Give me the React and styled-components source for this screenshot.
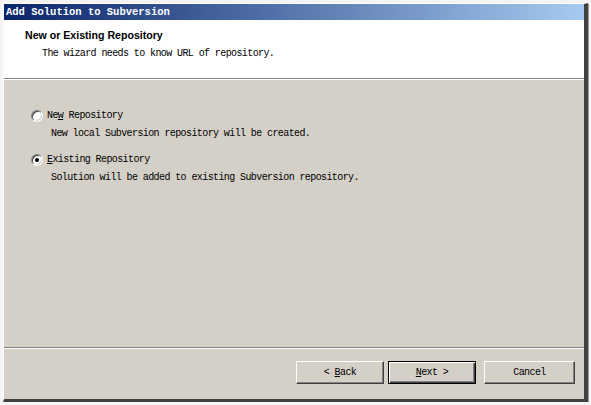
import styled, { createGlobalStyle } from "styled-components";

const GlobalStyle = createGlobalStyle`
    html, body {
        margin: 0;
        padding: 0;
        background: #f4f4f4;
    }
`;

const mono = `"Liberation Mono", "DejaVu Sans Mono", monospace`;

const Window = styled.div`
    box-sizing: border-box;
    margin: 3px 0 0 3px;
    width: 585px;
    height: 399px;
    display: flex;
    flex-direction: column;
    background: #d4d0c8;
    border-top: 1px solid #ffffff;
    border-left: 1px solid #ffffff;
    border-right: 4px solid #404040;
    border-bottom: 3px solid #404040;
    box-shadow: 1px 1px 0 #a0a0a0;
`;

const TitleBar = styled.div`
    height: 16px;
    display: flex;
    align-items: center;
    padding-left: 2px;
    background: linear-gradient(to right, #0a246a, #a6caf0);
    color: #ffffff;
    font-family: ${mono};
    font-weight: bold;
    font-size: 10.5px;
`;

const Header = styled.div`
    height: 59px;
    box-sizing: border-box;
    background: #ffffff;
    padding: 9px 0 0 21px;
    border-bottom: 1px solid #808080;
    box-shadow: 0 1px 0 #ffffff;
    margin-bottom: 1px;
`;

const Heading = styled.div`
    font-family: "Liberation Sans", Arial, sans-serif;
    font-weight: bold;
    font-size: 10.6px;
    line-height: 12px;
    color: #000;
`;

const Subtitle = styled.div`
    margin: 7px 0 0 17px;
    font-family: ${mono};
    font-size: 10px;
    letter-spacing: -0.6px;
    line-height: 12px;
    color: #000;
`;

const Body = styled.div`
    flex: 1;
    padding: 30px 0 0 27px;
    display: flex;
    flex-direction: column;
    gap: 14px;
    border-bottom: 1px solid #808080;
    box-shadow: 0 1px 0 #ffffff;
    margin-bottom: 1px;
`;

const Option = styled.div`
    display: flex;
    flex-direction: column;
    gap: 6px;
`;

const OptionRow = styled.label`
    display: flex;
    align-items: center;
    gap: 4px;
`;

const Radio = styled.span`
    box-sizing: border-box;
    width: 12px;
    height: 12px;
    border-radius: 50%;
    background: #ffffff;
    border: 1px solid;
    border-color: #808080 #ffffff #ffffff #808080;
    box-shadow: inset 1px 1px 0 #404040, inset -1px -1px 0 #d4d0c8;
    display: flex;
    align-items: center;
    justify-content: center;
    &::after {
        content: "";
        width: 4px;
        height: 4px;
        border-radius: 50%;
        background: ${(p) => (p.checked ? "#000" : "transparent")};
    }
`;

const Text = styled.span`
    font-family: ${mono};
    font-size: 10px;
    letter-spacing: -0.6px;
    line-height: 12px;
    color: #000;
`;

const Description = styled(Text)`
    padding-left: 20px;
`;

const Key = styled.u`
    text-decoration: underline;
`;

const Footer = styled.div`
    height: 50px;
    box-sizing: border-box;
    display: flex;
    justify-content: flex-end;
    padding: 12px 9px 0 0;
`;

const Button = styled.button`
    box-sizing: border-box;
    width: ${(p) => p.w || 88}px;
    height: 23px;
    margin-left: ${(p) => p.gap || 0}px;
    padding: 0;
    background: #d4d0c8;
    font-family: ${mono};
    font-size: 10px;
    letter-spacing: -0.6px;
    color: #000;
    border: 1px solid;
    border-color: ${(p) => (p.primary ? "#000" : "#ffffff #404040 #404040 #ffffff")};
    box-shadow: ${(p) =>
        p.primary
            ? "inset 1px 1px 0 #ffffff, inset -1px -1px 0 #404040, inset -2px -2px 0 #808080"
            : "inset -1px -1px 0 #808080"};
`;

function App() {
    return (
        <>
            <GlobalStyle />
            <Window>
                <TitleBar>Add Solution to Subversion</TitleBar>
                <Header>
                    <Heading>New or Existing Repository</Heading>
                    <Subtitle>The wizard needs to know URL of repository.</Subtitle>
                </Header>
                <Body>
                    <Option>
                        <OptionRow>
                            <Radio />
                            <Text>
                                Ne<Key>w</Key> Repository
                            </Text>
                        </OptionRow>
                        <Description>New local Subversion repository will be created.</Description>
                    </Option>
                    <Option>
                        <OptionRow>
                            <Radio checked />
                            <Text>
                                <Key>E</Key>xisting Repository
                            </Text>
                        </OptionRow>
                        <Description>Solution will be added to existing Subversion repository.</Description>
                    </Option>
                </Body>
                <Footer>
                    <Button>
                        &lt; <Key>B</Key>ack
                    </Button>
                    <Button primary gap={4}>
                        <Key>N</Key>ext &gt;
                    </Button>
                    <Button w={91} gap={8}>
                        Cancel
                    </Button>
                </Footer>
            </Window>
        </>
    );
}

export default App;
